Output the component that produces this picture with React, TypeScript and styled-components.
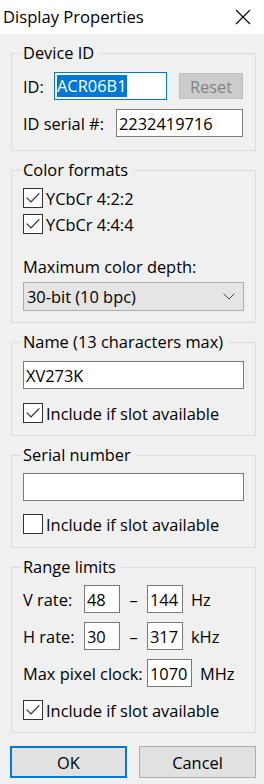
import React from 'react';
import styled, { createGlobalStyle } from 'styled-components';

const GlobalStyle = createGlobalStyle`
  * { box-sizing: border-box; }
  html, body {
    margin: 0;
    padding: 0;
    background: #f0f0f0;
  }
  body {
    font-family: 'Open Sans', 'Noto Sans', sans-serif;
    font-size: 16.4px;
    color: #000;
  }
`;

const CheckBox: React.FC<{ checked?: boolean }> = ({ checked }) => (
  <Box>
    {checked && (
      <svg width="18" height="18" viewBox="0 0 18 18">
        <path d="M2.7 8.6 L7 12.9 L15.3 4.4" fill="none" stroke="#333" strokeWidth="1.3" />
      </svg>
    )}
  </Box>
);

const Check: React.FC<{ checked?: boolean; label: string; mt?: number }> = ({ checked, label, mt }) => (
  <CheckRow $mt={mt}>
    <CheckBox checked={checked} />
    <span>{label}</span>
  </CheckRow>
);

const App: React.FC = () => {
  return (
    <Window>
      <GlobalStyle />
      <TitleBar>
        <Title>Display Properties</Title>
        <CloseButton>
          <svg width="16" height="16" viewBox="0 0 16 16">
            <path d="M1 1 L15 15 M15 1 L1 15" stroke="#000" strokeWidth="1.1" />
          </svg>
        </CloseButton>
      </TitleBar>

      <Body>
        <Group $pb={13}>
          <Legend>Device ID</Legend>
          <Row>
            <Label $w={31}>ID:</Label>
            <Field $w={113} $focused>
              <Selected>ACR06B1</Selected>
            </Field>
            <ResetButton>Reset</ResetButton>
          </Row>
          <Row $mt={9}>
            <Label $w={93}>ID serial #:</Label>
            <Field $w={127}>2232419716</Field>
          </Row>
        </Group>

        <Group $pt={7} $pb={11}>
          <Legend>Color formats</Legend>
          <Check checked label="YCbCr 4:2:2" mt={0} />
          <Check checked label="YCbCr 4:4:4" mt={6} />
          <Caption>Maximum color depth:</Caption>
          <Select>
            <span>30-bit (10 bpc)</span>
            <svg width="12" height="7" viewBox="0 0 12 7">
              <path d="M0.5 0.5 L6 6 L11.5 0.5" fill="none" stroke="#444" strokeWidth="1" />
            </svg>
          </Select>
        </Group>

        <Group>
          <Legend>Name (13 characters max)</Legend>
          <Field>XV273K</Field>
          <Check checked label="Include if slot available" mt={14} />
        </Group>

        <Group $pt={7} $pb={13}>
          <Legend>Serial number</Legend>
          <Field />
          <Check label="Include if slot available" />
        </Group>

        <Group $pt={7}>
          <Legend>Range limits</Legend>
          <Row>
            <Label $w={61}>V rate:</Label>
            <Field $w={36}>48</Field>
            <Dash>–</Dash>
            <Field $w={36}>144</Field>
            <Unit>Hz</Unit>
          </Row>
          <Row $mt={9}>
            <Label $w={61}>H rate:</Label>
            <Field $w={36}>30</Field>
            <Dash>–</Dash>
            <Field $w={36}>317</Field>
            <Unit>kHz</Unit>
          </Row>
          <Row $mt={9}>
            <Label $w={124}>Max pixel clock:</Label>
            <Field $w={45}>1070</Field>
            <Unit>MHz</Unit>
          </Row>
          <Check checked label="Include if slot available" />
        </Group>

        <Buttons>
          <Button $default>OK</Button>
          <Button>Cancel</Button>
        </Buttons>
      </Body>
    </Window>
  );
};

const Window = styled.div`
  width: 264px;
  height: 784px;
  display: flex;
  flex-direction: column;
  overflow: hidden;
`;

const TitleBar = styled.div`
  height: 34px;
  flex-shrink: 0;
  background: #fff;
  display: flex;
  align-items: center;
  justify-content: space-between;
  padding-left: 3px;
`;

const Title = styled.div`
  font-size: 16.6px;
  line-height: 22px;
`;

const CloseButton = styled.div`
  width: 42px;
  height: 34px;
  display: flex;
  align-items: center;
  justify-content: center;
`;

const Body = styled.div`
  display: flex;
  flex-direction: column;
  gap: 8px;
  padding: 8px 8px 0 10px;
`;

const Group = styled.fieldset<{ $pt?: number; $pb?: number }>`
  margin: 0 0 0 1px;
  min-width: 0;
  border: 1px solid #dcdcdc;
  padding: ${({ $pt = 8 }) => $pt}px 11px ${({ $pb = 12 }) => $pb}px 11px;
  display: flex;
  flex-direction: column;
`;

const Legend = styled.legend`
  margin-left: -2px;
  padding: 0 5px 0 2px;
  line-height: 22px;
`;

const Row = styled.div<{ $mt?: number }>`
  display: flex;
  align-items: center;
  height: 28px;
  margin-top: ${({ $mt = 0 }) => $mt}px;
`;

const Label = styled.span<{ $w: number }>`
  width: ${({ $w }) => $w}px;
  flex-shrink: 0;
  white-space: nowrap;
`;

const Field = styled.div<{ $w?: number; $focused?: boolean }>`
  width: ${({ $w }) => ($w ? `${$w}px` : '100%')};
  height: 28px;
  flex-shrink: 0;
  background: #fff;
  border: 1px solid ${({ $focused }) => ($focused ? '#0078d7' : '#7a7a7a')};
  padding-left: 2px;
  display: flex;
  align-items: center;
  white-space: nowrap;
  overflow: hidden;
`;

const Selected = styled.span`
  background: #0078d7;
  color: #fff;
  line-height: 22px;
`;

const ResetButton = styled.div`
  margin-left: 12px;
  width: 64px;
  height: 26px;
  background: #cccccc;
  border: 1px solid #bfbfbf;
  color: #838383;
  display: flex;
  align-items: center;
  justify-content: center;
`;

const CheckRow = styled.div<{ $mt?: number }>`
  display: flex;
  align-items: center;
  gap: 3px;
  height: 20px;
  margin-top: ${({ $mt = 13 }) => $mt}px;
  white-space: nowrap;
`;

const Box = styled.span`
  width: 20px;
  height: 20px;
  flex-shrink: 0;
  border: 1px solid #333;
  background: #fff;
  display: flex;
  align-items: center;
  justify-content: center;
`;

const Caption = styled.div`
  line-height: 22px;
  margin-top: 22px;
`;

const Select = styled.div`
  margin-top: 4px;
  height: 29px;
  background: #e5e5e5;
  border: 1px solid #adadad;
  display: flex;
  align-items: center;
  justify-content: space-between;
  padding: 0 8px 0 3px;
`;

const Dash = styled.span`
  width: 27px;
  text-align: center;
  flex-shrink: 0;
`;

const Unit = styled.span`
  margin-left: 8px;
`;

const Buttons = styled.div`
  display: flex;
  gap: 12px;
  margin-top: 5px;
`;

const Button = styled.div<{ $default?: boolean }>`
  width: 117px;
  height: 32px;
  background: #e1e1e1;
  border: ${({ $default }) => ($default ? '2px solid #0078d7' : '1px solid #adadad')};
  display: flex;
  align-items: center;
  justify-content: center;
`;

export default App;
